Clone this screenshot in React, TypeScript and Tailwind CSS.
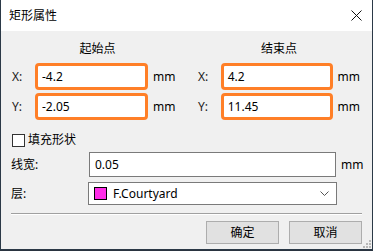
import React from "react";

const font = { fontFamily: '"Noto Sans", "Noto Sans CJK SC", sans-serif' };

function OrangeInput({ value }: { value: string }) {
  return (
    <div className="flex h-[27px] w-[113px] items-center rounded-[4px] border-[3px] border-[#ff7f27] bg-white pl-[4px] text-[12px] text-black">
      {value}
    </div>
  );
}

function CoordRow({ label, value }: { label: string; value: string }) {
  return (
    <div className="flex h-[27px] items-center">
      <span className="w-[23px] text-[12px] text-[#1a1a1a]">{label}</span>
      <OrangeInput value={value} />
      <span className="ml-[5px] text-[12px] text-black">mm</span>
    </div>
  );
}

function Column({ title, x, y, labelW }: { title: string; x: string; y: string; labelW: string }) {
  return (
    <div className={`flex flex-col ${labelW}`}>
      <div className="flex h-[16px] items-center justify-center text-[12px] text-black">{title}</div>
      <div className="mt-[6px] flex flex-col gap-[3px]">
        <CoordRow label="X:" value={x} />
        <CoordRow label="Y:" value={y} />
      </div>
    </div>
  );
}

export default function App() {
  return (
    <div className="h-[251px] w-[373px] bg-[#2a3440]" style={font}>
      <div className="flex h-[250px] w-[373px] flex-col border-x border-b border-[#2b3947] bg-[#f0f0f0]">
        {/* title bar */}
        <div className="flex h-[31px] items-center justify-between bg-white pl-[8px] pr-[9px]">
          <span className="text-[12px] text-black">矩形属性</span>
          <svg width="11" height="11" viewBox="0 0 11 11" className="mr-[1px]">
            <path d="M0.5 0.5 L10.5 10.5 M10.5 0.5 L0.5 10.5" stroke="#111" strokeWidth="1" fill="none" />
          </svg>
        </div>

        {/* coordinates */}
        <div className="flex pl-[11px] pt-[10px]">
          <div className="w-[171px]">
            <Column title="起始点" x="-4.2" y="-2.05" labelW="w-[171px]" />
          </div>
          <div className="ml-[15px] w-[162px]">
            <Column title="结束点" x="4.2" y="11.45" labelW="w-[162px]" />
          </div>
        </div>

        {/* checkbox */}
        <div className="ml-[11px] mt-[13px] flex h-[14px] items-center">
          <div className="h-[13px] w-[13px] border border-[#333] bg-white" />
          <span className="ml-[3px] text-[12px] text-black">填充形状</span>
        </div>

        {/* line width */}
        <div className="ml-[10px] mt-[5px] flex h-[25px] items-center">
          <span className="w-[78px] text-[12px] text-black">线宽:</span>
          <div className="flex h-[25px] w-[247px] items-center border border-[#7a7a7a] bg-white pl-[5px] text-[12px] text-black">
            0.05
          </div>
          <span className="ml-[5px] text-[12px] text-black">mm</span>
        </div>

        {/* layer */}
        <div className="ml-[10px] mt-[5px] flex h-[23px] items-center">
          <span className="w-[77px] text-[12px] text-black">层:</span>
          <div className="flex h-[23px] w-[249px] items-center border border-[#7a7a7a] bg-white pl-[5px] pr-[7px] text-[12px] text-black">
            <div className="h-[13px] w-[13px] border border-black bg-[#ff2ee8]" />
            <span className="ml-[6px] flex-1">F.Courtyard</span>
            <svg width="9" height="5" viewBox="0 0 9 5">
              <path d="M0.5 0.5 L4.5 4.5 L8.5 0.5" stroke="#555" strokeWidth="1" fill="none" />
            </svg>
          </div>
        </div>

        {/* separator */}
        <div className="ml-[10px] mr-[10px] mt-[8px] h-[2px] border-t border-b border-t-[#a0a0a0] border-b-white" />

        {/* buttons */}
        <div className="relative flex flex-1 justify-end pr-[10px] pt-[6px]">
          <div className="flex gap-[10px]">
            <button className="flex h-[23px] w-[73px] items-center justify-center border border-[#adadad] bg-[#e1e1e1] text-[12px] text-black">
              确定
            </button>
            <button className="flex h-[23px] w-[73px] items-center justify-center border border-[#adadad] bg-[#e1e1e1] text-[12px] text-black">
              取消
            </button>
          </div>
          <svg width="8" height="8" viewBox="0 0 8 8" className="absolute bottom-[1px] right-[1px]">
            <rect x="6" y="0" width="2" height="2" fill="#b8b8b8" />
            <rect x="3" y="3" width="2" height="2" fill="#b8b8b8" />
            <rect x="6" y="3" width="2" height="2" fill="#b8b8b8" />
            <rect x="0" y="6" width="2" height="2" fill="#b8b8b8" />
            <rect x="3" y="6" width="2" height="2" fill="#b8b8b8" />
            <rect x="6" y="6" width="2" height="2" fill="#b8b8b8" />
          </svg>
        </div>
      </div>
    </div>
  );
}
